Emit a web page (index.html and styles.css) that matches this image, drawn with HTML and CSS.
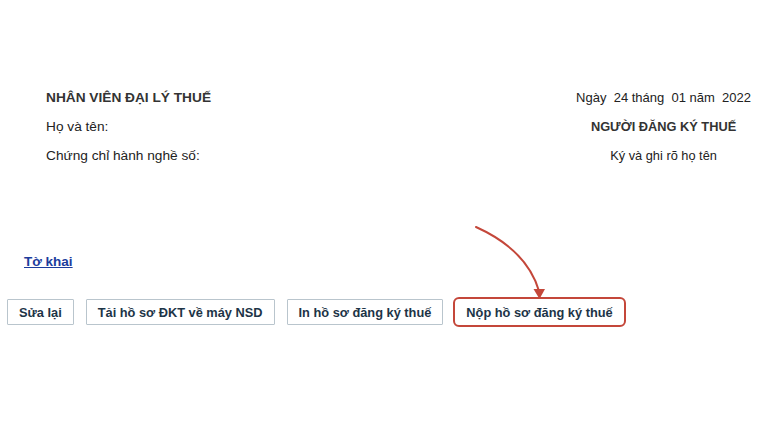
FILE: index.html
```html
<!DOCTYPE html>
<html lang="vi">
<head>
<meta charset="utf-8">
<link rel="stylesheet" href="styles.css">
</head>
<body>
<div class="page">
  <section class="sign">
    <div class="col-left">
      <div class="line title-l">NHÂN VIÊN ĐẠI LÝ THUẾ</div>
      <div class="line">Họ và tên:</div>
      <div class="line">Chứng chỉ hành nghề số:</div>
    </div>
    <div class="col-right">
      <div class="line date">Ngày&nbsp; 24 tháng&nbsp; 01 năm&nbsp; 2022</div>
      <div class="line title">NGƯỜI ĐĂNG KÝ THUẾ</div>
      <div class="line small">Ký và ghi rõ họ tên</div>
    </div>
  </section>
  <div class="links"><a class="link" href="#">Tờ khai</a></div>
  <div class="actions">
    <button class="btn">Sửa lại</button>
    <button class="btn">Tải hồ sơ ĐKT về máy NSD</button>
    <button class="btn">In hồ sơ đăng ký thuế</button>
    <button class="btn btn-hl">Nộp hồ sơ đăng ký thuế</button>
  </div>
  <svg class="arrow" width="765" height="421" viewBox="0 0 765 421">
    <path d="M476 227 Q527 250 539 291" fill="none" stroke="#c4473a" stroke-width="2" stroke-linecap="round"/>
    <path d="M533.5 289 L545 289 L539.5 299 Z" fill="#c4473a"/>
  </svg>
</div>
</body>
</html>
```
FILE: styles.css
```css
html, body {
  margin: 0;
  padding: 0;
  background: #ffffff;
}
body {
  font-family: "Liberation Sans", Arial, sans-serif;
  color: #222222;
}
.page {
  position: relative;
  width: 765px;
  height: 421px;
  overflow: hidden;
}
.sign {
  display: flex;
  justify-content: space-between;
  padding: 83px 14px 0 46px;
  height: 166px;
}
.line {
  line-height: 29px;
  font-size: 13.7px;
  white-space: nowrap;
}
.title-l {
  font-weight: bold;
  font-size: 13.7px;
  color: #333333;
}
.title {
  font-weight: bold;
  font-size: 12.8px;
  color: #333333;
}
.date {
  font-size: 13px;
}
.col-right {
  text-align: center;
}
.small {
  font-size: 12.8px;
}
.links {
  padding-left: 24px;
  height: 48px;
  line-height: 24px;
}
.link {
  font-size: 13.5px;
  font-weight: bold;
  color: #1c3c9c;
  text-decoration: underline;
}
.actions {
  display: flex;
  align-items: center;
  gap: 12px;
  padding-left: 7px;
}
.btn {
  font-family: "Liberation Sans", Arial, sans-serif;
  font-size: 12.8px;
  font-weight: bold;
  color: #1d3447;
  background: #ffffff;
  border: 1px solid #b9c5cd;
  border-radius: 1px;
  height: 26px;
  padding: 0 11px;
  margin: 0;
}
.btn-hl {
  border: 2px solid #c4473a;
  border-radius: 6px;
  height: 30px;
  padding: 0 11px;
  margin-left: -2px;
}
.arrow {
  position: absolute;
  left: 0;
  top: 0;
  pointer-events: none;
}
```
